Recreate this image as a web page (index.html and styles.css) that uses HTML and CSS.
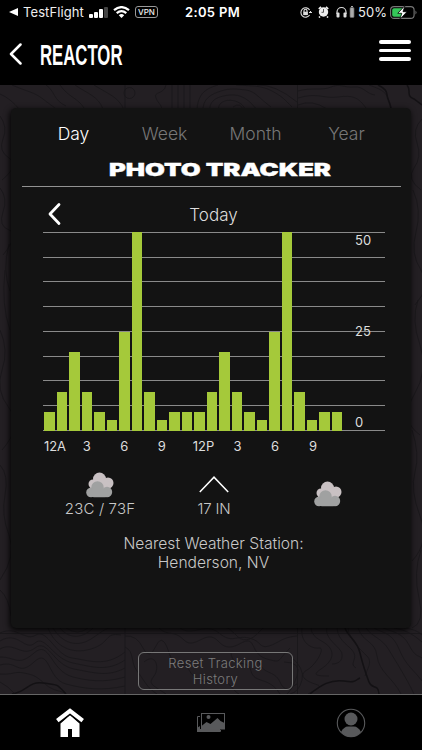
FILE: index.html
```html
<!DOCTYPE html>
<html lang="en">
<head>
<meta charset="utf-8">
<title>Reactor</title>
<link rel="stylesheet" href="styles.css">
</head>
<body>
<div class="app">
  <div class="status">
    <svg class="s-back" width="9" height="8" viewBox="0 0 9 8"><path d="M9 0v8L0 4z" fill="#fff"/></svg>
    <span class="s-app">TestFlight</span>
    <svg class="s-signal" width="19" height="11" viewBox="0 0 19 11"><g fill="#fff"><rect y="7" width="4" height="4" rx="1"/><rect x="5" y="5" width="4" height="6" rx="1"/><rect x="10" y="2" width="4" height="9" rx="1"/></g><rect x="15" width="4" height="11" rx="1" fill="#444"/></svg>
    <svg class="s-wifi" width="17" height="12" viewBox="0 0 17 12"><g fill="none" stroke="#fff" stroke-width="2.2"><path d="M1 4.2Q8.500-2 16 4.200M3.700 7.200Q8.500 3.200 13.300 7.200"/></g><path d="M5.800 9.200Q8.500 7 11.200 9.200L8.500 12z" fill="#fff"/></svg>
    <span class="s-vpn">VPN</span>
    <span class="s-time">2:05 PM</span>
    <svg class="s-lock" width="12" height="11" viewBox="0 0 12 11"><g fill="none" stroke="#ddd" stroke-width="1.100"><path d="M9.600 3A4.700 4.700 0 1 0 9.600 8M9 5.500h3M10.500 4v1.500"/><path d="M4 5V3.800a1.500 1.500 0 0 1 3 0V5"/></g><rect x="3.200" y="4.700" width="4.700" height="3.400" fill="#ddd"/></svg>
    <svg class="s-alarm" width="11" height="12" viewBox="0 0 11 12"><circle cx="5.500" cy="6" r="4.700" fill="#eee"/><path d="M.8 3L3 .8M8 .8L10.200 3M2 10.500L1 11.500M9 10.500l1 1" stroke="#eee" stroke-width="1.700"/><path d="M5.500 3v3.300H3.500" fill="none" stroke="#333" stroke-width=".8"/></svg>
    <svg class="s-phones" width="19" height="12" viewBox="0 0 19 12"><path d="M1 8V6a4.500 4.500 0 0 1 9 0v2" fill="none" stroke="#ddd" stroke-width="1.200"/><rect x=".5" y="6.500" width="3" height="5" rx="1" fill="#ddd"/><rect x="7.500" y="6.500" width="3" height="5" rx="1" fill="#ddd"/><rect x="14" y="1.500" width="4" height="10" rx="1" fill="#aaa" stroke="#666" stroke-width=".7"/><path d="M15 .5h2" stroke="#aaa"/></svg>
    <span class="s-percent">50%</span>
    <svg class="s-battery" width="27" height="15" viewBox="0 0 27 15"><rect x=".6" y="1.600" width="23.500" height="11.800" rx="3.500" fill="none" stroke="#777" stroke-width="1.100"/><path d="M4 3.200h8.500v8.600H4a1.800 1.800 0 0 1-1.800-1.800V5A1.800 1.800 0 0 1 4 3.200z" fill="#35c759"/><path d="M25.500 5.500q2 2 0 4z" fill="#777"/><path d="M15 .5L7.800 8.300h4l-2 6.200L17 6.700h-4z" fill="#fff" stroke="#000" stroke-width=".8"/></svg>
  </div>
  <header class="header">
    <svg class="chev-back" width="13" height="22" viewBox="0 0 13 22"><path d="M11.500 1.500L2 11l9.500 9.500" fill="none" stroke="#fff" stroke-width="2.500" stroke-linecap="round" stroke-linejoin="round"/></svg>
    <svg class="brand" width="100" height="32" viewBox="0 0 100 32"><text x="0" y="25.500" textLength="82.500" lengthAdjust="spacingAndGlyphs">REACTOR</text></svg>
    <div class="menu"><i></i><i></i><i></i></div>
  </header>
  <main class="main">
    <svg class="topo" width="422" height="609" viewBox="0 85 422 609">
      <path d="M125 85v609M297.500 85v609M0 633.500h422"/>
      <path d="M12 85C28 92 34 92 43 99S54 107 60 112M46 85C55 91 53 100 66 106M60 85C68 97 78 98 84 108M75 85C88 94 98 96 103 109M94 85C108 94 119 97 124 110M0 94Q10 98 20 110"/>
      <circle cx="129.500" cy="93" r="5.500"/>
      <path d="M166 85C164 95 153 91 156 98S162 104 162 112M172 85v27M178 85v27M184 85v27M190 85v27M197 112C197 92 208 88 218 85M203 112C202 98 212 94 221 91S237 89 246 90 260 99 271 107M210 112C208 99 220 96 230 95S250 99 258 112M219 112C216 101 228 99 235 101S244 107 247 112M236 85C250 86 261 85 272 91S284 99 292 107M257 85Q275 84 297 102M233 107q8-6 11 5"/>
      <path d="M298 91C312 87 322 91 331 87S344 88 354 87 366 94 375 95M298 98C318 92 323 99 338 97S358 97 366 108M298 105Q312 99 327 109M369 85C380 89 385 91 388 98S390 106 391 112"/>
      <path class="bold" d="M378 85C389 90 386 94 388 99S391 107 392 112M407 85C412 91 405 95 414 99L422 105"/>
      <path d="M0 116Q8 127 3 139T9 158T2 180M0 188q8 10 3 24t6 18-6 25M9 244Q2 270 10 291M5 270q-4 35 5 60M0 330q9 20 2 40t7 38-7 42M0 465q9 10 5 30t4 40-9 45M0 590q9 8 11 26M422 119q-10 10-5 24t-3 25 7 22M413 190q9 20 3 42t5 38-6 35M418 300q-7 20 2 45t-6 50 6 40M412 430q8 24 3 42t5 44-8 45M421 550q-8 23-2 48t-7 30"/>
      <path d="M0 633C17 625 25 642 36 635S56 656 72 658 105 668 125 652M0 641C18 630 25 652 35 643S53 659 73 663 107 672 125 660M0 649C14 641 22 658 35 648S53 665 74 669 108 677 125 668M0 657C16 657 18 667 34 653S50 671 73 677 111 681 125 677M0 665C18 660 18 677 34 662S47 679 66 684 102 691 125 686M0 674C13 675 14 671 24 673S36 676 45 684 61 690 66 694M0 682Q8 686 15 694"/>
      <path d="M48 628C55 646 71 655 91 649S104 632 121 635M53 628C62 643 77 648 91 639S106 626 120 628M60 628C67 637 80 641 93 628M66 628Q78 636 88 628"/>
      <path class="bold" d="M12 694C27 692 28 681 43 683S56 683 66 694"/>
      <path d="M125 647C135 652 130 662 137 671S147 688 157 694M125 636Q137 635 143 648T156 646T170 656M159 628C168 637 173 629 184 640S206 628 218 641 239 642 247 641 252 655 267 659 276 662 290 648M180 628C192 637 206 622 219 633S236 635 249 638 259 649 269 646 282 637 297 636M207 628Q224 621 235 634T260 631T297 628M144 662C156 652 160 668 154 676S151 684 166 694M170 655C174 668 184 660 189 670S207 684 218 681 232 691 239 694M231 653C233 669 248 658 251 671S269 676 280 694M258 659C262 676 274 669 280 682S292 686 297 684M284 662q18 0 13 14t-10 18M290 656q15 12 12 24t-12 14"/>
      <path d="M302 628C300 643 312 649 319 648S316 665 307 670 305 681 315 684 316 689 308 694M311 628C312 640 325 640 330 648S330 663 321 669 316 676 329 676M327 628C324 639 341 647 342 654S338 664 332 664M337 628C338 642 351 646 354 653S349 664 356 668M348 628C349 640 361 650 367 656S367 669 365 676M358 628C363 643 375 640 377 656S393 678 401 694M366 628C372 637 382 638 389 650S406 677 414 694M374 628C382 633 392 632 399 649S414 670 422 681M383 628C393 632 403 633 409 645S418 655 422 658M394 628Q409 630 422 642M404 628q12 1 18 7"/>
      <path class="bold" d="M345 628C348 637 357 640 360 653S366 674 369 682 378 683 379 694M310 694C321 685 331 679 344 681S355 680 360 678"/>
    </svg>
    <section class="card">
      <nav class="tabs"><span class="on">Day</span><span>Week</span><span>Month</span><span>Year</span></nav>
      <svg class="title" width="250" height="26" viewBox="0 0 250 26"><text x="1" y="20" textLength="222" lengthAdjust="spacingAndGlyphs">PHOTO TRACKER</text></svg>
      <hr class="rule">
      <div class="range">
        <svg width="15" height="24" viewBox="0 0 15 24"><path d="M12 2.500L3 12l9 9.500" fill="none" stroke="#fff" stroke-width="2.800" stroke-linecap="round" stroke-linejoin="round"/></svg>
        <span>Today</span>
      </div>
      <div class="chart">
        <svg class="grid" width="342" height="199" viewBox="0 0 342 199"><path d="M0 .5h342M0 25.500h342M0 49.500h342M0 74.500h342M0 99.500h342M0 124.500h342M0 148.500h342M0 173.500h342M0 198.500h342"/></svg>
        <div class="bars" id="bars"></div>
        <div class="scale"><span>50</span><span>25</span><span>0</span></div>
      </div>
      <div class="hours"><span>12A</span><span>3</span><span>6</span><span>9</span><span>12P</span><span>3</span><span>6</span><span>9</span></div>
      <div class="weather">
        <div class="temp">
          <svg width="28" height="26" viewBox="0 0 28 26"><g fill="#c9c1c3"><circle cx="13.500" cy="7" r="6.500"/><circle cx="22" cy="11" r="5.500"/><circle cx="7" cy="12" r="4.500"/><rect x="6" y="9" width="18" height="8" rx="3"/></g><g fill="#a0a1a1"><circle cx="11.500" cy="15.500" r="6.200"/><circle cx="5" cy="20.500" r="4.800"/><circle cx="21" cy="20" r="5.200"/><rect x="5" y="17" width="17" height="8.300" rx="3"/></g></svg>
          <span>23C / 73F</span>
        </div>
        <div class="pressure">
          <svg width="30" height="17" viewBox="0 0 30 17"><path d="M.8 16L15 1.200 29.200 16" fill="none" stroke="#fff" stroke-width="1.500"/></svg>
          <span>17 IN</span>
        </div>
        <div class="sky">
          <svg width="28" height="26" viewBox="0 0 28 26"><g fill="#c9c1c3"><circle cx="13.500" cy="7" r="6.500"/><circle cx="22" cy="11" r="5.500"/><circle cx="7" cy="12" r="4.500"/><rect x="6" y="9" width="18" height="8" rx="3"/></g><g fill="#a0a1a1"><circle cx="11.500" cy="15.500" r="6.200"/><circle cx="5" cy="20.500" r="4.800"/><circle cx="21" cy="20" r="5.200"/><rect x="5" y="17" width="17" height="8.300" rx="3"/></g></svg>
        </div>
      </div>
      <p class="station">Nearest Weather Station:<br>Henderson, NV</p>
    </section>
    <button class="reset">Reset Tracking<br>History</button>
  </main>
  <footer class="tabbar">
    <svg width="30" height="30" viewBox="0 0 30 30"><path d="M5.500 15.500L15 7.300l9.500 8.200V29H17v-8h-4v8H5.500z" fill="#fff"/><path d="M2.300 12.700L15 2.800l12.700 9.900" fill="none" stroke="#fff" stroke-width="4"/><path d="M5 14.800L15 6.400l10 8.400" fill="none" stroke="#000" stroke-width="1"/></svg>
    <svg width="30" height="22" viewBox="0 0 30 22"><path d="M4 4.500H1.500v15h23V18" fill="none" stroke="#58595b"/><path d="M1 16l3-2v3h20v3H1z" fill="#58595b"/><rect x="5.500" y="1.500" width="23" height="15.500" fill="#000" stroke="#58595b"/><circle cx="12.500" cy="5" r="2" fill="#58595b"/><path d="M5.500 14l5-4 4 2 7-6 3 3 4 2v6h-23z" fill="#58595b"/></svg>
    <svg width="30" height="30" viewBox="0 0 30 30"><circle cx="15" cy="15" r="13.700" fill="none" stroke="#58595b" stroke-width="1.100"/><circle cx="15" cy="11" r="6.500" fill="#58595b"/><path d="M5 24q3-5.500 7-5.500h6q4 0 7 5.500-4 5-10 5T5 24z" fill="#58595b"/></svg>
  </footer>
</div>
<script src="app.js"></script>
</body>
</html>
```
FILE: styles.css
```css
* { box-sizing: border-box; }
body { margin: 0; background: #000; font-family: Inter, "Liberation Sans", sans-serif; }
.app { width: 422px; height: 750px; display: flex; flex-direction: column; overflow: hidden; }
.status { height: 24px; display: flex; align-items: center; color: #eee; font-size: 13px; padding-left: 9px; flex: none; }
.status > * { flex: none; }
.s-app { margin-left: 5px; width: 62px; font-size: 13px; letter-spacing: .1px; white-space: nowrap; }
.s-signal { margin-left: 4px; }
.s-wifi { margin-left: 5px; }
.s-vpn { margin-left: 5px; width: 23px; height: 12px; border: 1px solid #999; border-radius: 3px; font-size: 8px; line-height: 10px; text-align: center; font-weight: 500; }
.s-time { margin-left: 27px; width: 56px; font-weight: 600; font-size: 13px; letter-spacing: .35px; white-space: nowrap; color: #fff; }
.s-lock { margin-left: 59px; }
.s-alarm { margin-left: 6px; }
.s-phones { margin-left: 7px; }
.s-percent { margin-left: 3px; width: 30px; font-size: 13px; letter-spacing: .1px; }
.s-battery { margin-left: 2px; }
.header { height: 61px; display: flex; align-items: flex-start; padding: 19px 11px 0 9px; flex: none; }
.brand { margin-left: 18px; margin-top: -4px; }
.brand text { font: bold 29px "Liberation Sans", sans-serif; fill: #fff; }
.menu { margin-left: auto; margin-top: -3px; width: 32px; display: flex; flex-direction: column; gap: 5px; }
.menu i { height: 3.500px; border-radius: 2px; background: #fff; }
.main { position: relative; height: 609px; flex: none; background: #231f23; padding: 23px 11px 0; display: flex; flex-direction: column; align-items: center; }
.topo { position: absolute; left: 0; top: 0; fill: none; stroke: #1a171b; stroke-width: .9; }
.topo .bold { stroke: #131114; stroke-width: 1.500; }
.card { position: relative; width: 400px; height: 520px; flex: none; background: #131313; border-radius: 5px; box-shadow: -1px 2px 6px #000; display: flex; flex-direction: column; }
.tabs { height: 50px; padding: 0 17px; display: grid; grid-template-columns: repeat(4, 91px); font-size: 17.500px; font-weight: 300; line-height: 51px; text-align: center; color: #777; }
.tabs .on { color: #fff; }
.title { display: block; margin: -2px 0 0 97px; flex: none; }
.title text { font: 900 18px Inter, sans-serif; fill: #fff; stroke: #fff; stroke-width: .4px; }
.rule { width: 379px; height: 1px; flex: none; border: 0; background: #929292; margin: 4px 0 0 11px; }
.range { height: 45px; display: grid; grid-template-columns: 15px 300px; padding: 15px 0 0 36px; color: #ddd; font-size: 17px; font-weight: 300; line-height: 26px; }
.range span { text-align: center; padding-left: 3px; }
.chart { position: relative; margin-left: 32px; width: 342px; height: 199px; display: grid; grid-template-columns: 301px 41px; }
.grid { position: absolute; left: 0; top: 0; fill: none; stroke: #8a8a8a; }
.bars { position: relative; height: 199px; display: grid; grid-template-columns: repeat(24, 10.500px); column-gap: 2px; align-items: end; padding-left: 1px; }
.bars i { background: #a5c93a; }
.scale { position: relative; height: 198px; display: flex; flex-direction: column; justify-content: space-between; padding-left: 11px; color: #ddd; font-size: 13px; line-height: 16px; }
.hours { margin-left: 31px; height: 36px; display: grid; grid-template-columns: 26px 37.500px 37.500px 37.500px 46px 22px 53px 23px; font-size: 13px; line-height: 30px; color: #ddd; text-align: center; }
.weather { margin: 5px 0 0 34px; height: 50px; display: grid; grid-template-columns: 110px 118px 110px; color: #c8c8c8; font-size: 15px; font-weight: 300; line-height: 20px; }
.weather > div { display: flex; flex-direction: column; align-items: center; }
.weather span { white-space: nowrap; }
.temp span { margin-top: 1px; letter-spacing: .15px; }
.pressure svg { margin-top: 4px; }
.pressure span { margin-top: 6px; letter-spacing: -.2px; }
.pressure svg { margin-top: 4px; }
.sky svg { margin-top: 9px; }
.station { margin: 12px 0 0 5px; text-align: center; color: #c8c8c8; font-size: 15.600px; font-weight: 300; line-height: 19px; }
.reset { position: relative; margin: 24px 0 0 9px; width: 155px; height: 38px; flex: none; padding: 0; background: transparent; border: 1px solid #777; border-radius: 6px; color: #7c7c7c; font: 300 13px/16px Inter, sans-serif; letter-spacing: .35px; }
.tabbar { height: 56px; flex: none; border-top: 1px solid #666; display: grid; grid-template-columns: repeat(3, 140.600px); align-items: center; justify-items: center; }
```
FILE: app.js
```javascript
// Bar heights in pixels, one per hour
const counts = [19, 39, 79, 39, 19, 11, 99, 199, 39, 11, 19, 19, 19, 39, 79, 39, 19, 11, 99, 199, 39, 11, 19, 19];
document.getElementById("bars").innerHTML = counts.map(h => `<i style="height:${h}px"></i>`).join("");
```
